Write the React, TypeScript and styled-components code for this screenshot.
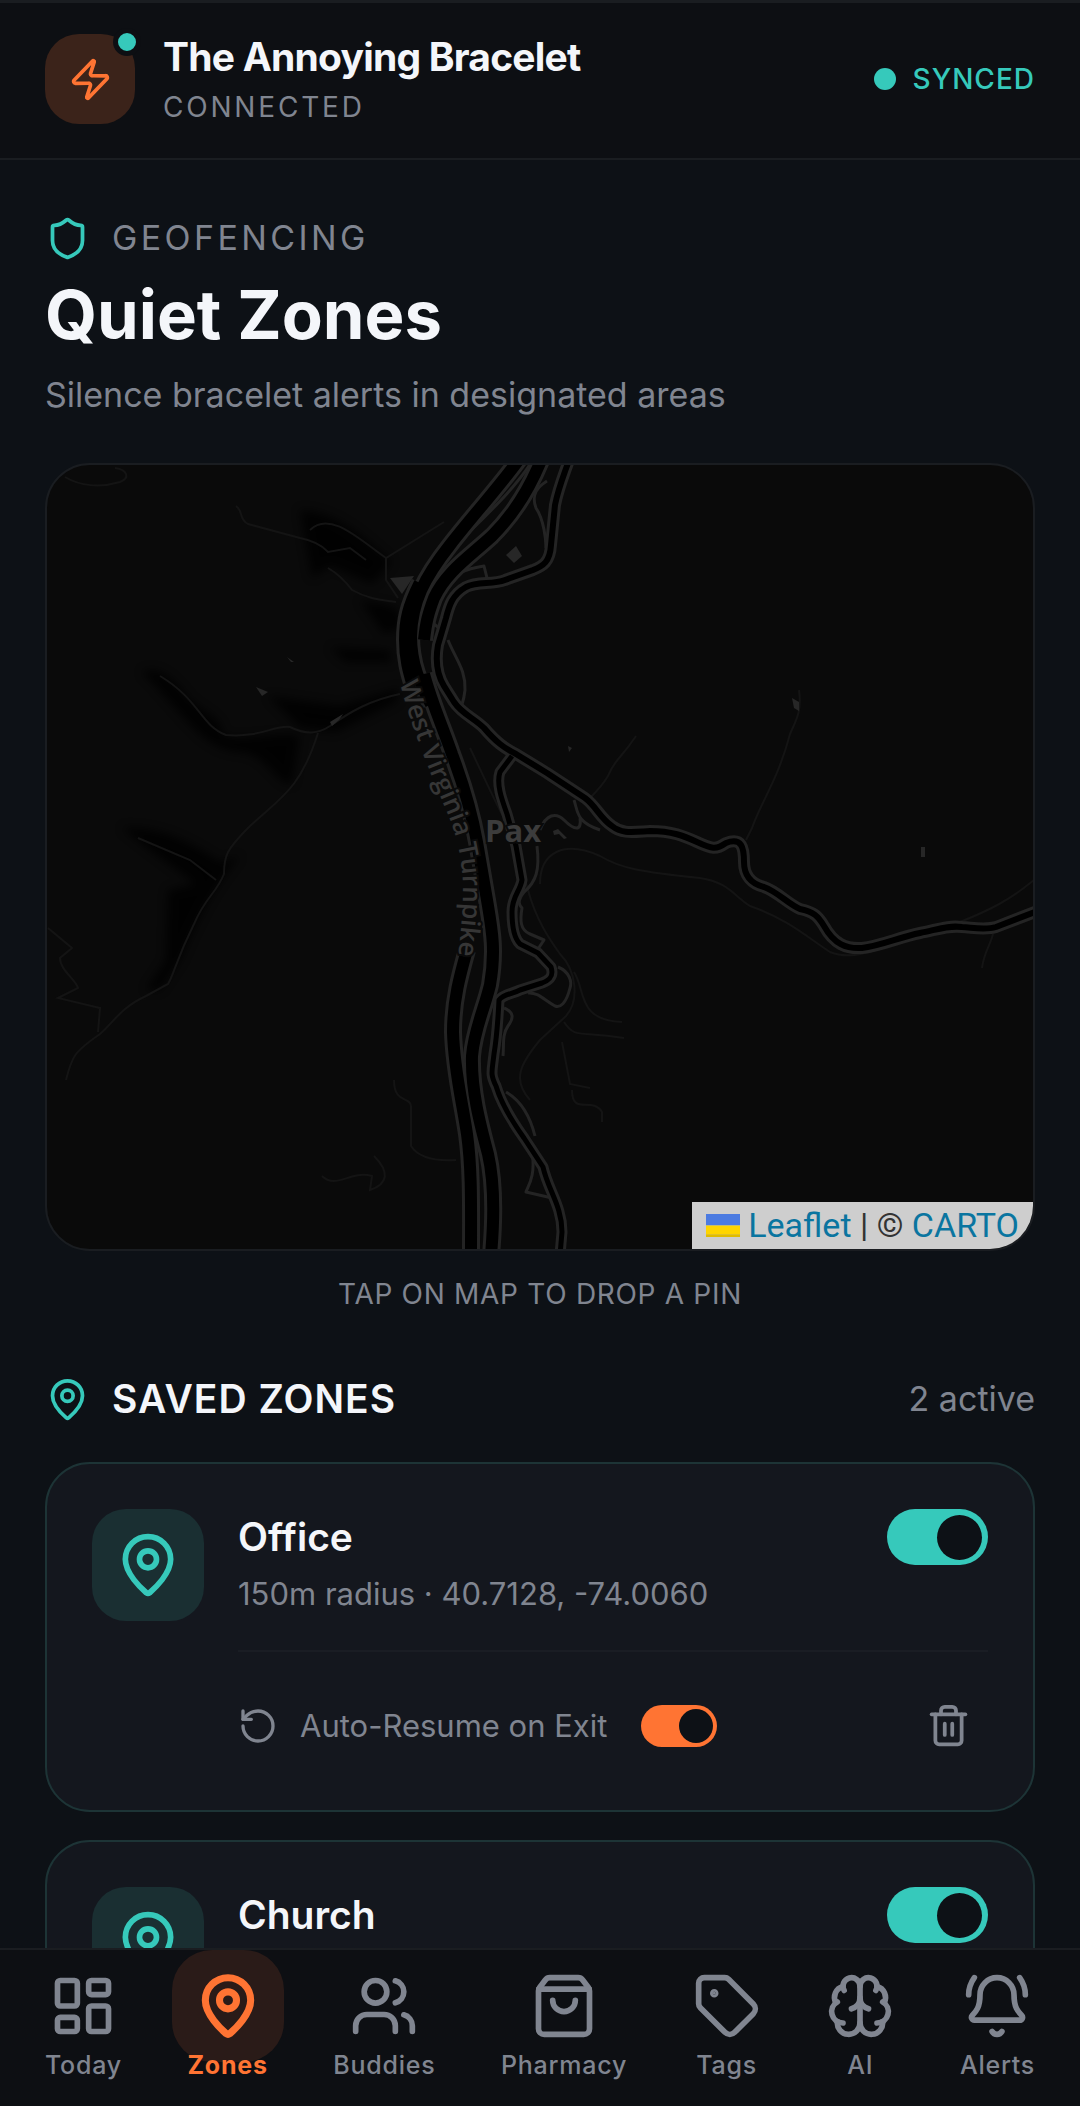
import React, { useState } from 'react';
import styled, { createGlobalStyle, css } from 'styled-components';
import {
  BellRing,
  Brain,
  LayoutDashboard,
  MapPin,
  RotateCcw,
  Shield,
  ShoppingBag,
  Tag,
  Trash2,
  Users,
  Zap,
  type LucideIcon,
} from 'lucide-react';

const color = {
  page: '#0d1116',
  bar: '#0d0f13',
  card: '#14171e',
  line: '#1a1d21',
  cardLine: '#1d3436',
  text: '#f4f6fa',
  muted: '#808590',
  teal: '#36c9bb',
  tealSoft: '#1a2f32',
  orange: '#ff7433',
  orangeSoft: '#3b231a',
  orangeDim: '#2a1b18',
};

const GlobalStyle = createGlobalStyle`
  *, *::before, *::after { box-sizing: border-box; }
  body {
    margin: 0;
    background: ${color.page};
    color: ${color.text};
    font-family: Inter, Roboto, sans-serif;
  }
  h1, h2, h3, p { margin: 0; font-weight: inherit; }
  button { border: 0; padding: 0; background: none; font: inherit; color: inherit; cursor: pointer; }
  svg { display: block; flex-shrink: 0; }
`;

const Shell = styled.div`
  display: flex;
  flex-direction: column;
  height: 100vh;
`;

/* Header */

const Header = styled.header`
  display: flex;
  align-items: center;
  gap: 28px;
  padding: 27px 45px 30px;
  background: ${color.bar};
  border-top: 3px solid ${color.line};
  border-bottom: 2px solid ${color.line};
`;

const Logo = styled.div`
  position: relative;
  display: grid;
  place-items: center;
  width: 90px;
  height: 90px;
  border-radius: 34px;
  background: ${color.orangeSoft};
  color: ${color.orange};
`;

const LogoDot = styled.span`
  position: absolute;
  top: -6px;
  right: -6px;
  width: 28px;
  height: 28px;
  border: 5px solid ${color.bar};
  border-radius: 50%;
  background: ${color.teal};
`;

const Brand = styled.div`
  display: flex;
  flex: 1;
  flex-direction: column;
  gap: 2px;
`;

const BrandName = styled.h1`
  font-size: 39px;
  font-weight: 700;
  line-height: 54px;
  letter-spacing: -0.02em;
`;

const BrandState = styled.p`
  color: ${color.muted};
  font-size: 28px;
  line-height: 42px;
  letter-spacing: 0.1em;
`;

const SyncState = styled.div`
  display: flex;
  align-items: center;
  gap: 17px;
  color: ${color.teal};
  font-size: 28px;
  font-weight: 500;
  letter-spacing: 1px;

  &::before {
    content: '';
    width: 22px;
    height: 22px;
    border-radius: 50%;
    background: currentColor;
  }
`;

/* Page */

const Main = styled.main`
  flex: 1;
  min-height: 0;
  overflow-y: auto;
  padding: 53px 45px 45px;
  scrollbar-width: none;
`;

const Eyebrow = styled.div`
  display: flex;
  align-items: center;
  gap: 22px;
  color: ${color.muted};
  font-size: 34px;
  line-height: 50px;
  letter-spacing: 0.1em;

  svg { color: ${color.teal}; }
`;

const PageTitle = styled.h2`
  margin-top: 10px;
  font-size: 67px;
  font-weight: 700;
  line-height: 84px;
`;

const PageIntro = styled.p`
  margin-top: 13px;
  color: ${color.muted};
  font-size: 34px;
  line-height: 50px;
`;

const MapFrame = styled.section`
  position: relative;
  height: 788px;
  margin-top: 43px;
  overflow: hidden;
  border: 2px solid ${color.line};
  border-radius: 45px;
  background: #0a0a0a;
`;

const MapCanvas = styled.svg`
  width: 100%;
  height: 100%;
`;

const Attribution = styled.div`
  position: absolute;
  right: 0;
  bottom: 0;
  display: flex;
  align-items: center;
  gap: 8px;
  padding: 0 14px;
  background: #cecece;
  color: #333;
  font-family: Roboto, 'Liberation Sans', sans-serif;
  font-size: 34px;
  line-height: 47px;
`;

const MapLink = styled.a`
  color: #0a75a0;
  text-decoration: none;
`;

const MapHint = styled.p`
  margin-top: 23px;
  color: ${color.muted};
  font-size: 28px;
  line-height: 40px;
  letter-spacing: 0.025em;
  text-align: center;
`;

const SectionHead = styled.div`
  display: flex;
  align-items: center;
  gap: 22px;
  margin: 57px 0 35px;
  line-height: 56px;

  svg { color: ${color.teal}; }
`;

const SectionTitle = styled.h2`
  flex: 1;
  font-size: 39px;
  font-weight: 600;
  letter-spacing: 1px;
`;

const SectionCount = styled.span`
  color: ${color.muted};
  font-size: 34px;
`;

/* Zone cards */

const ZoneList = styled.div`
  display: flex;
  flex-direction: column;
  gap: 28px;
`;

const ZoneCard = styled.article`
  display: flex;
  gap: 34px;
  padding: 45px;
  border: 2px solid ${color.cardLine};
  border-radius: 45px;
  background: ${color.card};
`;

const ZoneBadge = styled.div`
  display: grid;
  flex-shrink: 0;
  place-items: center;
  width: 112px;
  height: 112px;
  border-radius: 34px;
  background: ${color.tealSoft};
  color: ${color.teal};
`;

const ZoneBody = styled.div`
  flex: 1;
`;

const ZoneTop = styled.div`
  display: flex;
  align-items: center;
  justify-content: space-between;
`;

const ZoneName = styled.h3`
  font-size: 39px;
  font-weight: 600;
  line-height: 56px;
`;

const ZoneMeta = styled.p`
  margin-top: 6px;
  color: ${color.muted};
  font-size: 31px;
  line-height: 45px;
`;

const ZoneFooter = styled.div`
  display: flex;
  align-items: center;
  justify-content: space-between;
  margin-top: 34px;
  padding-top: 34px;
  border-top: 2px solid #1a1d24;
  color: ${color.muted};
`;

const AutoResume = styled.label`
  display: flex;
  align-items: center;
  gap: 22px;
  font-size: 31px;
  line-height: 45px;

  input { margin-left: 12px; }
`;

const DeleteButton = styled.button`
  padding: 17px;
`;

const Switch = styled.input<{ $small?: boolean }>`
  appearance: none;
  display: flex;
  flex-shrink: 0;
  align-items: center;
  width: 101px;
  height: 56px;
  margin: 0;
  padding: 0 6px;
  border-radius: 28px;
  background: #2a2e36;
  cursor: pointer;

  &::before {
    content: '';
    width: 45px;
    height: 45px;
    border-radius: 50%;
    background: ${color.page};
  }

  &:checked {
    justify-content: flex-end;
    background: ${color.teal};
  }

  ${({ $small }) =>
    $small &&
    css`
      width: 76px;
      height: 42px;
      padding: 0 4px;

      &::before {
        width: 34px;
        height: 34px;
      }

      &:checked {
        background: ${color.orange};
      }
    `}
`;

/* Bottom navigation */

const Nav = styled.nav`
  display: flex;
  justify-content: space-between;
  padding: 22px 45px 24px;
  border-top: 2px solid ${color.line};
  background: ${color.bar};
`;

const NavItem = styled.button<{ $active: boolean }>`
  position: relative;
  z-index: 0;
  display: flex;
  flex-direction: column;
  align-items: center;
  gap: 8px;
  color: ${({ $active }) => ($active ? color.orange : color.muted)};
  font-size: 25px;
  font-weight: ${({ $active }) => ($active ? 700 : 500)};
  line-height: 34px;
  letter-spacing: 0.03em;

  ${({ $active }) =>
    $active &&
    css`
      &::before {
        content: '';
        position: absolute;
        z-index: -1;
        top: -22px;
        left: 50%;
        width: 112px;
        height: 112px;
        border-radius: 40px;
        background: ${color.orangeDim};
        transform: translateX(-50%);
      }
    `}
`;

type Zone = { name: string; radius: number; lat: string; lng: string };

const zones: Zone[] = [
  { name: 'Office', radius: 150, lat: '40.7128', lng: '-74.0060' },
  { name: 'Church', radius: 100, lat: '40.7580', lng: '-73.9855' },
];

const tabs: { label: string; icon: LucideIcon }[] = [
  { label: 'Today', icon: LayoutDashboard },
  { label: 'Zones', icon: MapPin },
  { label: 'Buddies', icon: Users },
  { label: 'Pharmacy', icon: ShoppingBag },
  { label: 'Tags', icon: Tag },
  { label: 'AI', icon: Brain },
  { label: 'Alerts', icon: BellRing },
];

/* Roads: a grey casing pass first, then the black surface over it. */
const roads: { d: string; width: number }[] = [
  { width: 12, d: 'M542 458C530 488 514 514 492 536C468 558 446 572 434 598C428 614 426 622 424 640' },
  { width: 6, d: 'M568 463C562 480 558 490 555 505L551 545C550 562 543 566 533 570L505 580C492 585 478 581 466 587C452 595 449 606 446 618L438 645C435 662 438 676 444 686L454 702C462 714 474 718 484 728C496 742 504 748 516 754L547 773L585 798C596 806 600 818 612 826C622 834 632 832 650 831C672 831 684 836 697 842C712 849 716 850 726 843C742 837 744 848 744 862C744 876 752 884 764 887C778 892 788 904 800 909C814 912 818 916 824 926C834 944 846 949 862 948C880 946 900 937 920 933C936 930 948 925 962 927C976 928 986 930 996 927L1040 910' },
  { width: 5, d: 'M512 756L500 772C496 784 502 800 507 814L516 846L522 880C520 892 512 896 512 912C512 926 514 938 520 944L538 953L551 967C554 976 550 980 542 983L520 990C512 994 504 994 499 1000C498 1020 497 1036 494 1054C492 1072 490 1074 496 1086C502 1106 514 1124 524 1138L543 1167C548 1190 562 1206 562 1232L560 1255' },
  { width: 12, d: 'M520 458C500 486 474 514 450 545C424 578 412 602 411 636C411 664 420 684 431 704' },
  { width: 8, d: 'M418 582C406 606 403 620 403 640C403 662 408 676 412 690' },
  { width: 12, d: 'M424 674C432 704 444 730 452 754C464 786 472 814 477 842L487 900C492 930 496 950 490 985C484 1010 474 1030 472 1056C471 1090 480 1124 488 1154C494 1180 495 1210 491 1255' },
  { width: 12, d: 'M467 950C460 975 453 1000 453 1032C454 1070 462 1100 467 1134C472 1170 471 1210 471 1255' },
];

const lanes = [
  'M531 463C510 495 480 520 450 552',
  'M547 481C532 490 533 500 536 508C544 520 546 540 546 548',
  'M432 622C438 628 442 628 443 638M448 640C456 660 466 670 465 690C464 700 462 704 461 708',
  'M434 588C452 574 470 568 484 566L487 578',
  'M540 830C546 814 556 812 564 820C574 830 582 832 580 818M574 800C578 812 576 822 600 830',
  'M537 846C540 870 536 882 524 892C516 902 520 906 522 908C520 920 520 930 530 934L544 940L536 952',
  'M558 967C570 972 572 982 570 988C566 1004 560 1008 555 1006C544 1000 538 992 528 993',
  'M504 1008C514 1012 514 1018 508 1026C502 1034 504 1046 503 1056',
  'M506 1092C520 1100 530 1116 535 1136M532 1152C536 1176 528 1186 526 1192L552 1198',
];

const trails = [
  'M65 477C80 486 100 488 120 482C130 478 128 470 115 468',
  'M236 506C244 512 238 518 248 524L300 538C320 542 326 550 328 552L350 548L366 560M310 530C330 510 360 540 386 558L444 522',
  'M328 568C340 575 346 582 352 590C370 600 384 600 396 602M386 558L386 580L398 598',
  'M160 676C200 700 200 725 226 735C260 738 274 725 290 727C306 735 318 734 330 726C350 712 370 700 400 694',
  'M318 733C300 790 280 798 250 826C226 850 224 856 224 874C216 894 206 896 194 924C176 960 174 974 168 984L146 996C120 1008 114 1022 100 1034C74 1052 72 1056 66 1080',
  'M138 838L190 860L216 880',
  'M48 928L72 948L60 958C60 970 76 980 78 988L58 998L100 1008L98 1032',
  'M394 1080C394 1104 410 1096 411 1106V1146C420 1160 440 1161 456 1160M322 1176C336 1190 350 1170 372 1176L370 1190C388 1184 390 1172 374 1156',
  'M636 736C620 760 614 760 608 776C602 786 598 790 590 798M799 690C802 712 796 720 790 734C778 780 760 804 752 828L746 840',
  'M470 748C490 790 500 812 510 830L528 890C536 920 550 940 560 954C576 970 580 1000 566 1016L540 1040C520 1064 512 1080 530 1100',
  'M540 884C540 852 564 840 600 856C620 868 640 872 700 878C728 882 734 896 750 906C790 920 808 938 830 952C850 960 868 952 890 946M960 922C990 910 1010 900 1034 880M993 934C990 946 984 952 982 968',
  'M574 972C586 990 576 1020 622 1022M564 1022C576 1040 580 1030 624 1038M562 1042L570 1084L590 1088M572 1090C572 1116 592 1096 602 1112L602 1122',
];

const buildings = ['M516 546L522 556L514 563L506 555Z', 'M390 578L414 576L402 594Z', 'M330 722L343 714L339 720L332 726Z', 'M256 687L268 692L262 696Z', 'M287 657L294 662L291 662Z', 'M792 698L799 702L799 711L794 708Z', 'M921 847H925V857H921Z', 'M568 746L572 748L569 752Z', 'M553 831L558 829L567 838L564 839L559 834L554 835Z'];

const woods = [
  'M142 672C160 664 176 682 190 700C210 716 222 718 222 734C240 744 276 730 300 736L292 784C276 786 266 750 236 752C200 746 186 716 142 672Z',
  'M122 828C160 826 190 842 220 862L240 856C220 880 206 900 180 960L160 990L146 990L166 960L168 890L196 884L150 850Z',
  'M300 510C340 512 366 540 392 562L372 584L330 566L312 578Z',
  'M360 600C380 606 404 600 402 628L384 634ZM330 648L390 650L392 662L346 662Z',
  'M340 706L400 688L396 702L336 732L300 728L268 696Z',
];

function ZoneMap() {
  return (
    <MapCanvas viewBox="47 465 986 784" preserveAspectRatio="xMidYMid slice" role="img" aria-label="Map of Pax">
      <defs>
        <filter id="soft"><feGaussianBlur stdDeviation="5" /></filter>
        <path id="turnpike" d="M400 683C410 724 428 768 446 810C458 836 463 866 463 890C463 918 460 932 456 980" />
      </defs>
      <g fill="#060606" opacity="0.8" filter="url(#soft)">
        {woods.map((d) => <path key={d} d={d} />)}
      </g>
      <g fill="none" stroke="#141414" strokeWidth="2">
        {trails.map((d) => <path key={d} d={d} />)}
      </g>
      <g fill="#272727">
        {buildings.map((d) => <path key={d} d={d} />)}
      </g>
      <g fill="none" stroke="#242424" strokeLinejoin="round">
        {lanes.map((d) => <path key={d} d={d} strokeWidth="3" />)}
        {roads.map((r) => <path key={r.d} d={r.d} strokeWidth={r.width + 6} />)}
      </g>
      <g fill="none" stroke="#000" strokeLinejoin="round">
        {roads.map((r) => <path key={r.d} d={r.d} strokeWidth={r.width} />)}
      </g>
      <g fontFamily="Open Sans, Noto Sans, sans-serif" paintOrder="stroke" stroke="#0a0a0a" strokeWidth="4">
        <text fontSize="26" fontWeight="600" fill="#363636">
          <textPath href="#turnpike">West Virginia Turnpike</textPath>
        </text>
        <text x="485" y="842" fontSize="31" fontWeight="700" fill="#3c3c3c">Pax</text>
      </g>
    </MapCanvas>
  );
}

function ZoneItem({ zone, enabled, onToggle }: { zone: Zone; enabled: boolean; onToggle: () => void }) {
  const [autoResume, setAutoResume] = useState(true);
  return (
    <ZoneCard>
      <ZoneBadge><MapPin size={68} /></ZoneBadge>
      <ZoneBody>
        <ZoneTop>
          <ZoneName>{zone.name}</ZoneName>
          <Switch type="checkbox" role="switch" aria-label={zone.name} checked={enabled} onChange={onToggle} />
        </ZoneTop>
        <ZoneMeta>{zone.radius}m radius · {zone.lat}, {zone.lng}</ZoneMeta>
        <ZoneFooter>
          <AutoResume>
            <RotateCcw size={40} />
            Auto-Resume on Exit
            <Switch $small type="checkbox" role="switch" checked={autoResume} onChange={() => setAutoResume(!autoResume)} />
          </AutoResume>
          <DeleteButton type="button" aria-label={`Delete ${zone.name}`}><Trash2 size={45} /></DeleteButton>
        </ZoneFooter>
      </ZoneBody>
    </ZoneCard>
  );
}

export default function App() {
  const [activeTab, setActiveTab] = useState('Zones');
  const [disabled, setDisabled] = useState<string[]>([]);

  const toggle = (name: string) =>
    setDisabled((list) => (list.includes(name) ? list.filter((n) => n !== name) : [...list, name]));

  return (
    <Shell>
      <GlobalStyle />
      <Header>
        <Logo>
          <Zap size={45} />
          <LogoDot />
        </Logo>
        <Brand>
          <BrandName>The Annoying Bracelet</BrandName>
          <BrandState>CONNECTED</BrandState>
        </Brand>
        <SyncState>SYNCED</SyncState>
      </Header>

      <Main>
        <Eyebrow><Shield size={45} />GEOFENCING</Eyebrow>
        <PageTitle>Quiet Zones</PageTitle>
        <PageIntro>Silence bracelet alerts in designated areas</PageIntro>

        <MapFrame>
          <ZoneMap />
          <Attribution>
            <svg width="34" height="23" viewBox="0 0 12 8" preserveAspectRatio="none" aria-hidden="true">
              <path fill="#4C7BE1" d="M0 0h12v4H0z" />
              <path fill="#FFD500" d="M0 4h12v3H0z" />
              <path fill="#E0BC00" d="M0 7h12v1H0z" />
            </svg>
            <span>
              <MapLink href="#leaflet">Leaflet</MapLink> | © <MapLink href="#carto">CARTO</MapLink>
            </span>
          </Attribution>
        </MapFrame>
        <MapHint>TAP ON MAP TO DROP A PIN</MapHint>

        <SectionHead>
          <MapPin size={45} />
          <SectionTitle>SAVED ZONES</SectionTitle>
          <SectionCount>{zones.length - disabled.length} active</SectionCount>
        </SectionHead>
        <ZoneList>
          {zones.map((zone) => (
            <ZoneItem
              key={zone.name}
              zone={zone}
              enabled={!disabled.includes(zone.name)}
              onToggle={() => toggle(zone.name)}
            />
          ))}
        </ZoneList>
      </Main>

      <Nav>
        {tabs.map(({ label, icon: Icon }) => {
          const active = label === activeTab;
          return (
            <NavItem
              key={label}
              type="button"
              $active={active}
              aria-current={active ? 'page' : undefined}
              onClick={() => setActiveTab(label)}
            >
              <Icon size={68} strokeWidth={active ? 2.5 : 2} />
              {label}
            </NavItem>
          );
        })}
      </Nav>
    </Shell>
  );
}
